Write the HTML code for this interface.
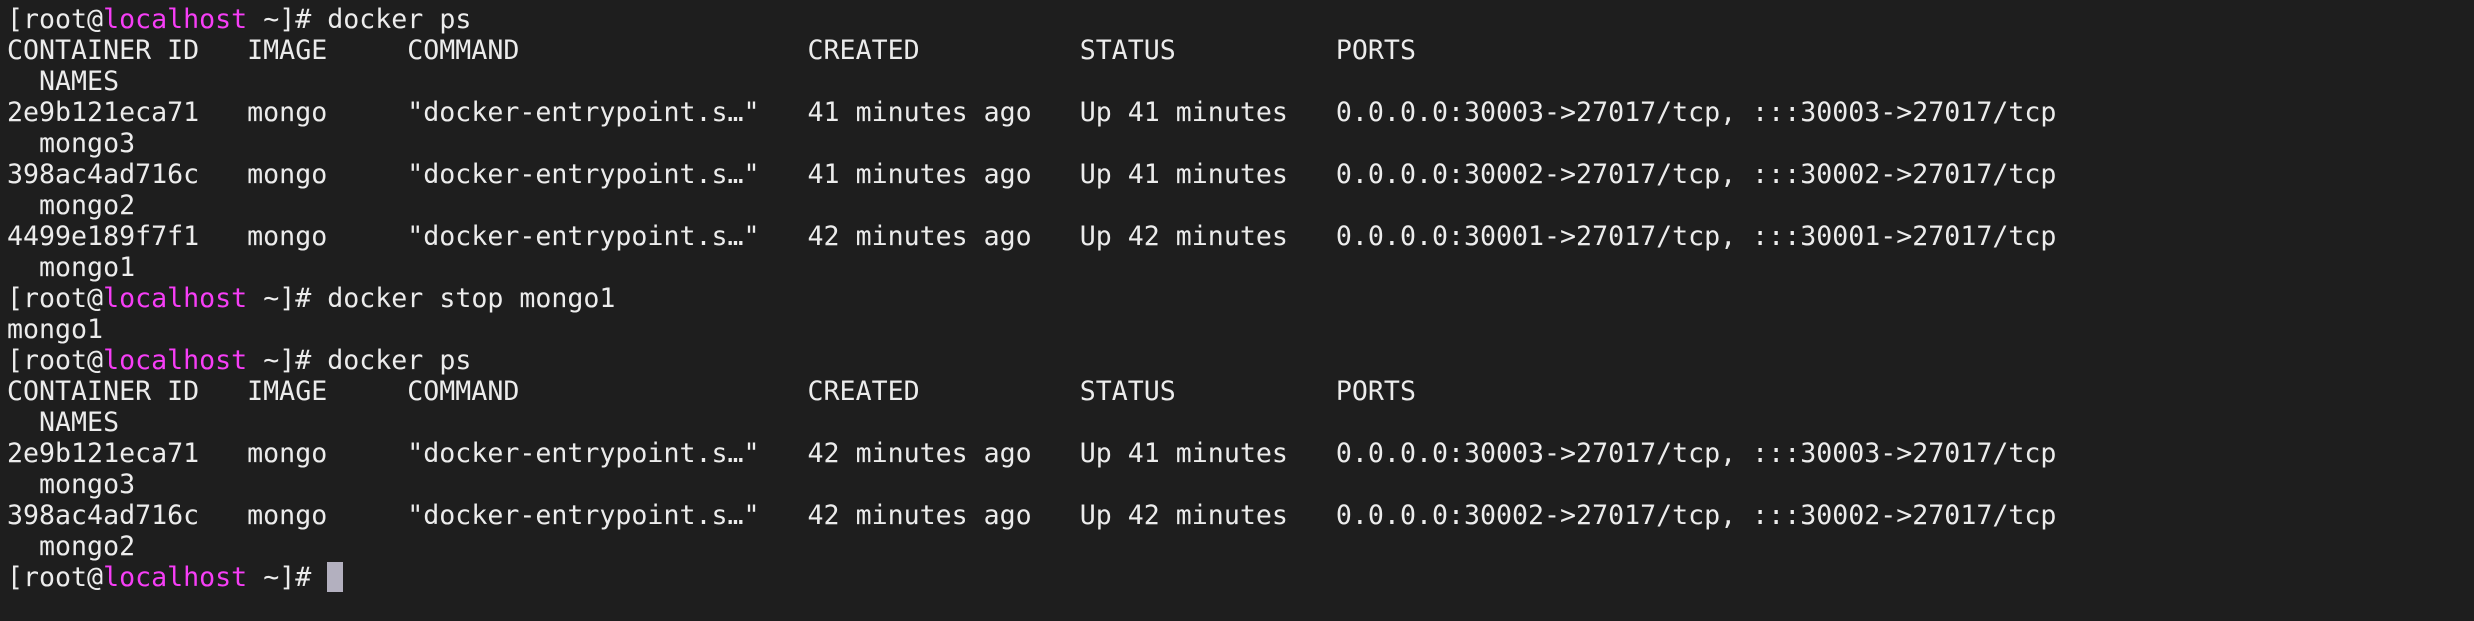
<!DOCTYPE html>
<html><head><meta charset="utf-8"><style>
html,body{margin:0;padding:0;background:#1e1e1e;width:2474px;height:621px;overflow:hidden}
pre{margin:0;padding:3.5px 0 0 7px;font-family:"DejaVu Sans Mono","Liberation Mono",monospace;font-size:26.6px;line-height:31px;color:#ececec;white-space:pre}
.m{color:#f63ef6}
.c{display:inline-block;width:16px;height:30px;background:#b3b0bf;vertical-align:top}
</style></head><body><pre>[root@<span class="m">localhost</span> ~]# docker ps
CONTAINER ID   IMAGE     COMMAND                  CREATED          STATUS          PORTS
  NAMES
2e9b121eca71   mongo     "docker-entrypoint.s…"   41 minutes ago   Up 41 minutes   0.0.0.0:30003->27017/tcp, :::30003->27017/tcp
  mongo3
398ac4ad716c   mongo     "docker-entrypoint.s…"   41 minutes ago   Up 41 minutes   0.0.0.0:30002->27017/tcp, :::30002->27017/tcp
  mongo2
4499e189f7f1   mongo     "docker-entrypoint.s…"   42 minutes ago   Up 42 minutes   0.0.0.0:30001->27017/tcp, :::30001->27017/tcp
  mongo1
[root@<span class="m">localhost</span> ~]# docker stop mongo1
mongo1
[root@<span class="m">localhost</span> ~]# docker ps
CONTAINER ID   IMAGE     COMMAND                  CREATED          STATUS          PORTS
  NAMES
2e9b121eca71   mongo     "docker-entrypoint.s…"   42 minutes ago   Up 41 minutes   0.0.0.0:30003->27017/tcp, :::30003->27017/tcp
  mongo3
398ac4ad716c   mongo     "docker-entrypoint.s…"   42 minutes ago   Up 42 minutes   0.0.0.0:30002->27017/tcp, :::30002->27017/tcp
  mongo2
[root@<span class="m">localhost</span> ~]# <span class="c"></span></pre></body></html>
